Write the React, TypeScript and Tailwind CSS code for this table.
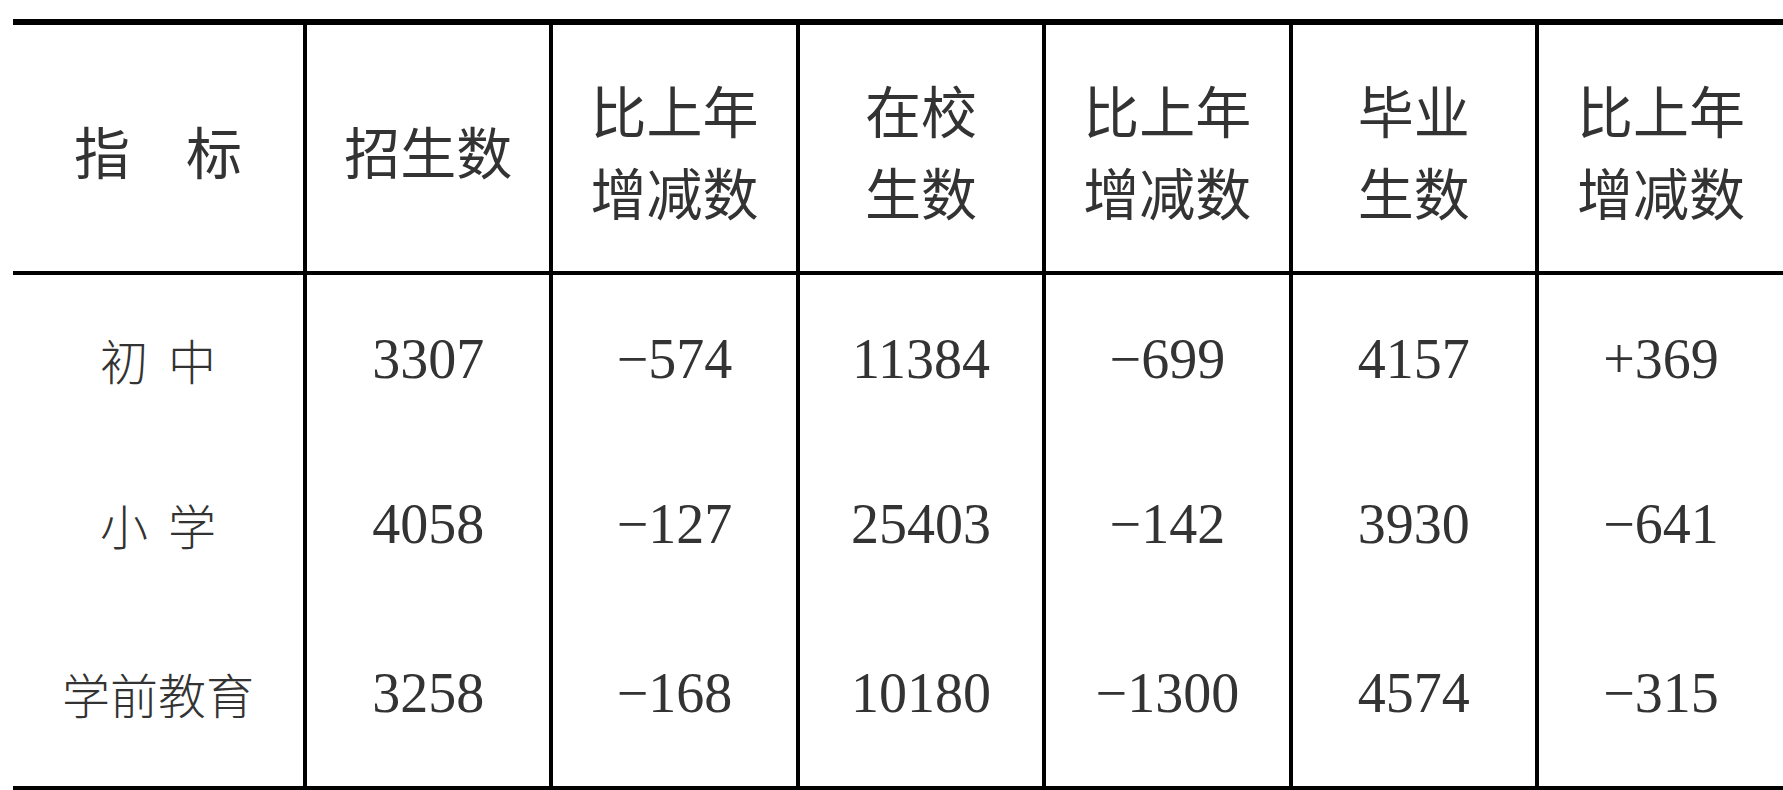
import React from 'react';

const headers: string[][] = [
  ['指\u3000标'],
  ['招生数'],
  ['比上年', '增减数'],
  ['在校', '生数'],
  ['比上年', '增减数'],
  ['毕业', '生数'],
  ['比上年', '增减数'],
];

const rows: { name: string[]; vals: string[] }[] = [
  { name: ['初', '中'], vals: ['3307', '\u2212574', '11384', '\u2212699', '4157', '+369'] },
  { name: ['小', '学'], vals: ['4058', '\u2212127', '25403', '\u2212142', '3930', '\u2212641'] },
  { name: ['学前教育'], vals: ['3258', '\u2212168', '10180', '\u22121300', '4574', '\u2212315'] },
];

const cjk = { fontFamily: '"Noto Sans CJK SC", "Noto Sans", sans-serif' };
const num = { fontFamily: '"Liberation Serif", "Noto Sans CJK SC", serif' };

export default function App() {
  return (
    <div className="w-[1783px] h-[790px] bg-white overflow-hidden">
      <div className="ml-[13px] mt-[19px] w-[1770px] border-t-[6px] border-b-4 border-black">
        <div className="grid grid-cols-[290px_repeat(5,246.4px)_1fr] grid-rows-[250px_168px_162px_181px]">
          {headers.map((h, i) => (
            <div
              key={'h' + i}
              className={
                'flex flex-col items-center justify-center border-b-4 border-black pt-[4px] text-[56px] leading-[82px] font-normal text-[#333] ' +
                (i > 0 ? 'border-l-4' : '')
              }
              style={cjk}
            >
              {h.map((line, j) => (
                <span key={j} className="whitespace-pre">
                  {line}
                </span>
              ))}
            </div>
          ))}
          {rows.map((r, ri) => (
            <React.Fragment key={'r' + ri}>
              <div
                className={
                  'flex items-center justify-center gap-[20px] text-[48px] font-light text-[#333] ' +
                  (ri === 2 ? 'pb-[5px]' : '')
                }
                style={cjk}
              >
                {r.name.map((n, k) => (
                  <span key={k}>{n}</span>
                ))}
              </div>
              {r.vals.map((v, vi) => (
                <div
                  key={vi}
                  className={
                    'flex items-center justify-center border-l-4 border-black text-[56px] text-[#333] ' +
                    (ri === 2 ? 'pb-[5px]' : '')
                  }
                  style={num}
                >
                  {v}
                </div>
              ))}
            </React.Fragment>
          ))}
        </div>
      </div>
    </div>
  );
}
